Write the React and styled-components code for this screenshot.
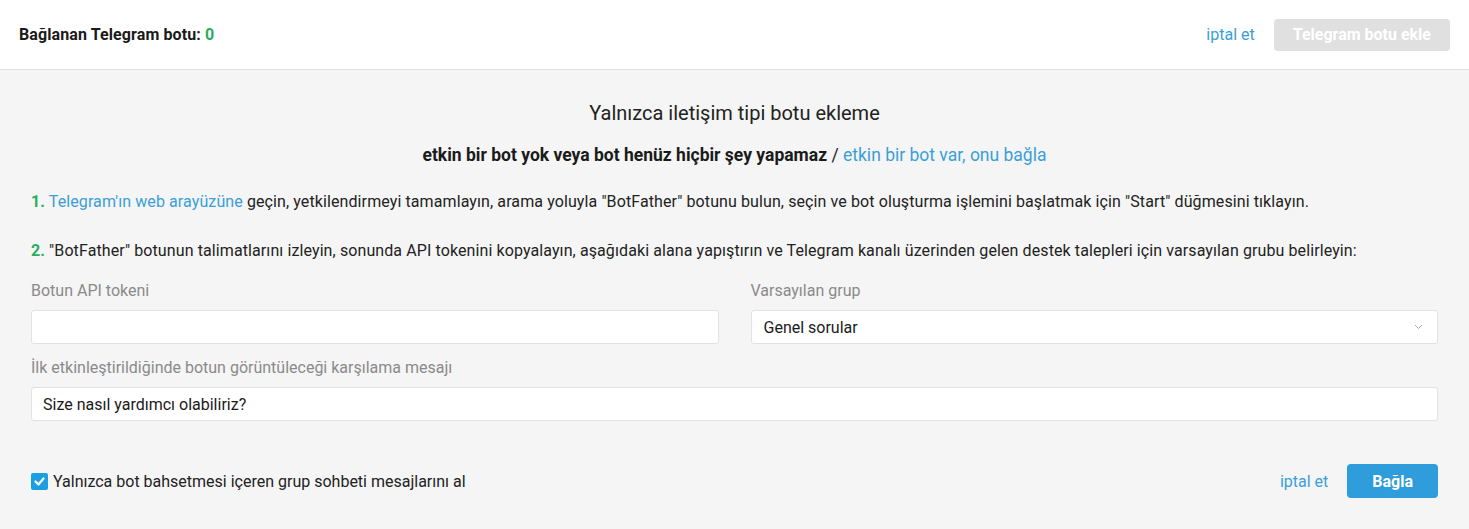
import React from 'react'
import styled, { createGlobalStyle } from 'styled-components'

const GlobalStyle = createGlobalStyle`
  body {
    margin: 0;
    font-family: Roboto, "Liberation Sans", sans-serif;
    background: #f5f5f5;
    color: #1a1a1a;
  }
`
const Header = styled.div`
  height: 69px;
  background: #fff;
  border-bottom: 1px solid #e0e0e0;
  display: flex;
  align-items: center;
  justify-content: space-between;
  padding: 0 19px;
`
const Counter = styled.div`
  font-size: 16px;
  font-weight: 700;
  color: #1a1a1a;
  letter-spacing: 0.1px;
`
const Green = styled.span`
  color: #27ae60;
`
const Actions = styled.div`
  display: flex;
  align-items: center;
  gap: ${props => props.gap || 19}px;
`
const LinkText = styled.a`
  color: #3a9fd8;
  font-size: ${props => props.size || 16}px;
  font-weight: 400;
  cursor: pointer;
  text-decoration: none;
`
const Button = styled.button`
  height: ${props => props.h || 34}px;
  padding: 0 ${props => props.px || 19}px;
  border: none;
  border-radius: 4px;
  font-family: inherit;
  font-size: 16px;
  font-weight: 700;
  color: #fff;
  background: ${props => props.disabled ? '#e0e0e0' : '#2f9cdb'};
  cursor: ${props => props.disabled ? 'not-allowed' : 'pointer'};
`
const Body = styled.div`
  padding: 30px 31px 0;
`
const Title = styled.h2`
  margin: 0;
  text-align: center;
  font-size: 20px;
  font-weight: 400;
  line-height: 26px;
  color: #222;
`
const Subtitle = styled.div`
  margin-top: 17px;
  text-align: center;
  font-size: 17.5px;
  font-weight: 700;
  line-height: 24px;
`
const Light = styled.span`
  font-weight: 400;
`
const Step = styled.p`
  margin: ${props => props.mt || 0}px 0 0;
  font-size: 16px;
  line-height: 20px;
  letter-spacing: 0.1px;
  color: #222;
`
const Num = styled.b`
  color: #27ae60;
`
const Grid = styled.div`
  display: grid;
  grid-template-columns: 1fr 1fr;
  column-gap: 32px;
  margin-top: 20px;
`
const Field = styled.div`
  display: flex;
  flex-direction: column;
  margin-top: ${props => props.mt || 0}px;
`
const Label = styled.label`
  font-size: 16px;
  color: #8a8a8a;
  line-height: 20px;
  margin-bottom: 9px;
`
const Input = styled.input`
  box-sizing: border-box;
  height: 34px;
  border: 1px solid #e2e2e2;
  border-radius: 3px;
  background: #fff;
  padding: 0 11px;
  font-family: inherit;
  font-size: 16px;
  color: #1a1a1a;
  outline: none;
`
const Select = styled.div`
  box-sizing: border-box;
  height: 34px;
  border: 1px solid #e2e2e2;
  border-radius: 3px;
  background: #fff;
  padding: 0 14px 0 12px;
  display: flex;
  align-items: center;
  justify-content: space-between;
  font-size: 16px;
  color: #1a1a1a;
`
const Footer = styled.div`
  display: flex;
  align-items: center;
  justify-content: space-between;
  margin-top: 43px;
`
const CheckRow = styled.label`
  display: flex;
  align-items: center;
  gap: 5px;
  font-size: 16px;
  color: #222;
`
const Box = styled.span`
  width: 17px;
  height: 17px;
  border-radius: 2px;
  background: #1a9fe0;
  display: flex;
  align-items: center;
  justify-content: center;
`

const App = () => {
  return (
    <>
      <GlobalStyle />
      <Header>
        <Counter>Bağlanan Telegram botu: <Green>0</Green></Counter>
        <Actions>
          <LinkText>iptal et</LinkText>
          <Button disabled h={32} px={19}>Telegram botu ekle</Button>
        </Actions>
      </Header>
      <Body>
        <Title>Yalnızca iletişim tipi botu ekleme</Title>
        <Subtitle>
          etkin bir bot yok veya bot henüz hiçbir şey yapamaz <Light>/</Light> <LinkText size={17.5}>etkin bir bot var, onu bağla</LinkText>
        </Subtitle>
        <Step mt={25}>
          <Num>1.</Num> <LinkText>Telegram'ın web arayüzüne</LinkText> geçin, yetkilendirmeyi tamamlayın, arama yoluyla "BotFather" botunu bulun, seçin ve bot oluşturma işlemini başlatmak için "Start" düğmesini tıklayın.
        </Step>
        <Step mt={29}>
          <Num>2.</Num> "BotFather" botunun talimatlarını izleyin, sonunda API tokenini kopyalayın, aşağıdaki alana yapıştırın ve Telegram kanalı üzerinden gelen destek talepleri için varsayılan grubu belirleyin:
        </Step>
        <Grid>
          <Field>
            <Label>Botun API tokeni</Label>
            <Input />
          </Field>
          <Field>
            <Label>Varsayılan grup</Label>
            <Select>
              <span>Genel sorular</span>
              <svg width="9" height="6" viewBox="0 0 9 6" fill="none" stroke="#aaa" strokeWidth="1">
                <path d="M1 1l3.5 3.5L8 1" />
              </svg>
            </Select>
          </Field>
        </Grid>
        <Field mt={14}>
          <Label>İlk etkinleştirildiğinde botun görüntüleceği karşılama mesajı</Label>
          <Input defaultValue="Size nasıl yardımcı olabiliriz?" />
        </Field>
        <Footer>
          <CheckRow>
            <Box>
              <svg width="11" height="9" viewBox="0 0 11 9" fill="none" stroke="#fff" strokeWidth="2.2" strokeLinecap="round" strokeLinejoin="round">
                <path d="M1.5 4.5l3 3L9.5 1.5" />
              </svg>
            </Box>
            Yalnızca bot bahsetmesi içeren grup sohbeti mesajlarını al
          </CheckRow>
          <Actions gap={19}>
            <LinkText>iptal et</LinkText>
            <Button px={25}>Bağla</Button>
          </Actions>
        </Footer>
      </Body>
    </>
  )
}

export default App
